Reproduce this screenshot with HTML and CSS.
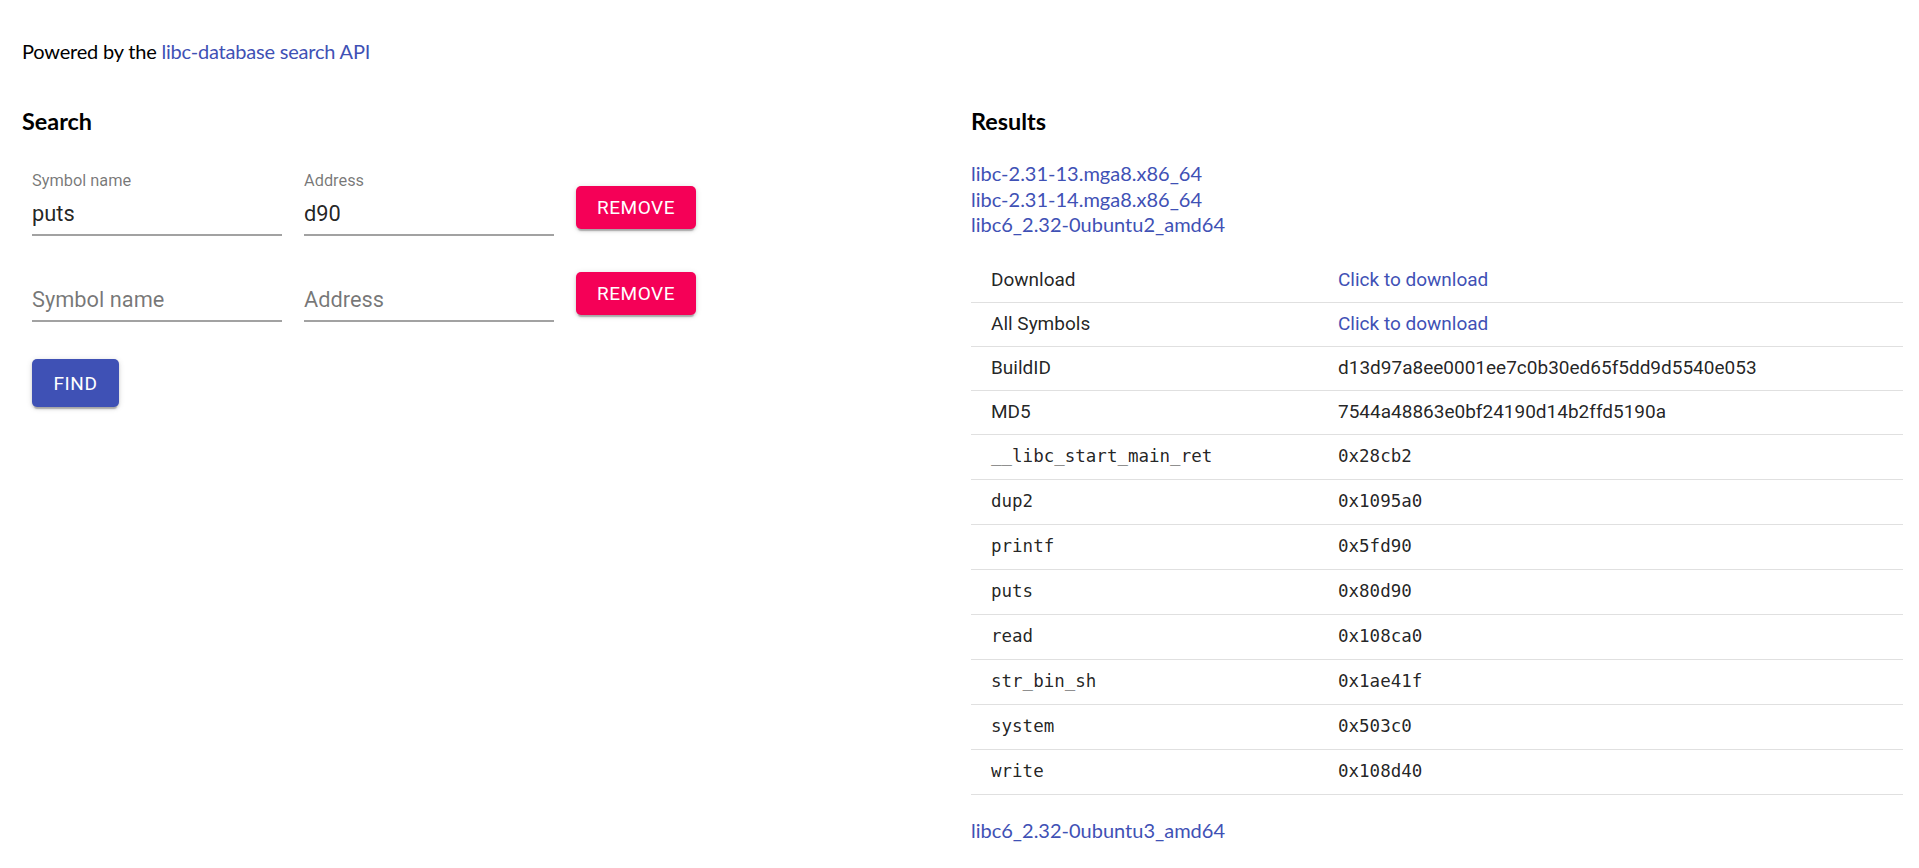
FILE: index.html
```html
<!DOCTYPE html>
<html lang="en">
<head>
<meta charset="utf-8">
<title>libc database search</title>
<link rel="stylesheet" href="styles.css">
</head>
<body>
<div class="page">
  <p class="powered">Powered by the <a class="link" href="#">libc-database search API</a></p>
  <div class="columns">
    <section class="search">
      <h3 class="heading">Search</h3>
      <div class="form">
        <div class="row">
          <div class="field">
            <div class="label">Symbol name</div>
            <div class="input">puts</div>
          </div>
          <div class="field">
            <div class="label">Address</div>
            <div class="input">d90</div>
          </div>
          <button class="btn remove" type="button">Remove</button>
        </div>
        <div class="row">
          <div class="field">
            <div class="label"></div>
            <div class="input placeholder">Symbol name</div>
          </div>
          <div class="field">
            <div class="label"></div>
            <div class="input placeholder">Address</div>
          </div>
          <button class="btn remove" type="button">Remove</button>
        </div>
        <div class="actions">
          <button class="btn find" type="button">Find</button>
        </div>
      </div>
    </section>
    <section class="results">
      <h3 class="heading">Results</h3>
      <ul class="libs">
        <li><a class="link" href="#">libc-2.31-13.mga8.x86_64</a></li>
        <li><a class="link" href="#">libc-2.31-14.mga8.x86_64</a></li>
        <li><a class="link" href="#">libc6_2.32-0ubuntu2_amd64</a></li>
      </ul>
      <table class="info">
        <colgroup><col class="c1"><col></colgroup>
        <tbody>
          <tr><td>Download</td><td><a class="link" href="#">Click to download</a></td></tr>
          <tr><td>All Symbols</td><td><a class="link" href="#">Click to download</a></td></tr>
          <tr><td>BuildID</td><td>d13d97a8ee0001ee7c0b30ed65f5dd9d5540e053</td></tr>
          <tr><td>MD5</td><td>7544a48863e0bf24190d14b2ffd5190a</td></tr>
          <tr class="mono"><td>__libc_start_main_ret</td><td>0x28cb2</td></tr>
          <tr class="mono"><td>dup2</td><td>0x1095a0</td></tr>
          <tr class="mono"><td>printf</td><td>0x5fd90</td></tr>
          <tr class="mono"><td>puts</td><td>0x80d90</td></tr>
          <tr class="mono"><td>read</td><td>0x108ca0</td></tr>
          <tr class="mono"><td>str_bin_sh</td><td>0x1ae41f</td></tr>
          <tr class="mono"><td>system</td><td>0x503c0</td></tr>
          <tr class="mono"><td>write</td><td>0x108d40</td></tr>
        </tbody>
      </table>
      <div class="more"><a class="link" href="#">libc6_2.32-0ubuntu3_amd64</a></div>
    </section>
  </div>
</div>
</body>
</html>
```
FILE: styles.css
```css
* { box-sizing: border-box; }
html, body { margin: 0; padding: 0; background: #fff; }
body {
  font-family: Lato, "Noto Sans", sans-serif;
  font-size: 20px;
  color: #000;
}
.page { padding: 0 16px 0 22px; }
.link { color: #3f51b5; text-decoration: none; }
.powered { margin: 0; padding-top: 38px; line-height: 27px; letter-spacing: -0.2px; }
.columns {
  margin-top: 41px;
  display: grid;
  grid-template-columns: 949px 1fr;
}
.heading {
  margin: 0;
  font-size: 23.4px;
  line-height: 31px;
  font-weight: 700;
}
.form {
  margin-top: 34px;
  padding-left: 10px;
  display: flex;
  flex-direction: column;
}
.row { display: flex; align-items: flex-start; gap: 22px; }
.row + .row { margin-top: 21px; }
.field {
  width: 250px;
  display: flex;
  flex-direction: column;
  font-family: Roboto, sans-serif;
}
.label {
  height: 20px;
  font-size: 16.35px;
  line-height: 20px;
  color: rgba(0, 0, 0, 0.54);
}
.input {
  margin-top: 10px;
  font-size: 21.8px;
  line-height: 26px;
  padding-bottom: 7px;
  border-bottom: 2px solid #a2a2a2;
  color: rgba(0, 0, 0, 0.87);
}
.input.placeholder { color: rgba(0, 0, 0, 0.54); }
.btn {
  border: none;
  border-radius: 5px;
  color: #fff;
  font-family: Roboto, sans-serif;
  font-weight: 400;
  font-size: 19px;
  letter-spacing: 0.55px;
  text-transform: uppercase;
  padding: 0 20px;
  display: flex;
  align-items: center;
  justify-content: center;
  box-shadow: 0 4px 1px -2px rgba(0,0,0,0.2), 0 2px 3px 0 rgba(0,0,0,0.14), 0 1px 6px 0 rgba(0,0,0,0.12);
}
.remove {
  margin-top: 15px;
  width: 120px;
  height: 43px;
  background: #f50057;
}
.actions { margin-top: 37px; display: flex; }
.find {
  width: 87px;
  height: 48px;
  background: #3f51b5;
}
.libs {
  list-style: none;
  margin: 24px 0 0;
  padding: 0;
  line-height: 25.5px;
}
.info {
  margin-top: 21px;
  width: 100%;
  border-collapse: collapse;
  table-layout: fixed;
  font-family: Roboto, sans-serif;
  font-size: 19px;
  color: rgba(0, 0, 0, 0.87);
}
.info .c1 { width: 347px; }
.info td {
  padding: 9.5px 20px;
  line-height: 24px;
  border-bottom: 1px solid #e0e0e0;
  white-space: nowrap;
}
.info tr.mono td {
  font-family: "DejaVu Sans Mono", monospace;
  font-size: 17.5px;
  line-height: 25px;
}
.more { margin-top: 23px; line-height: 25.5px; }
```
